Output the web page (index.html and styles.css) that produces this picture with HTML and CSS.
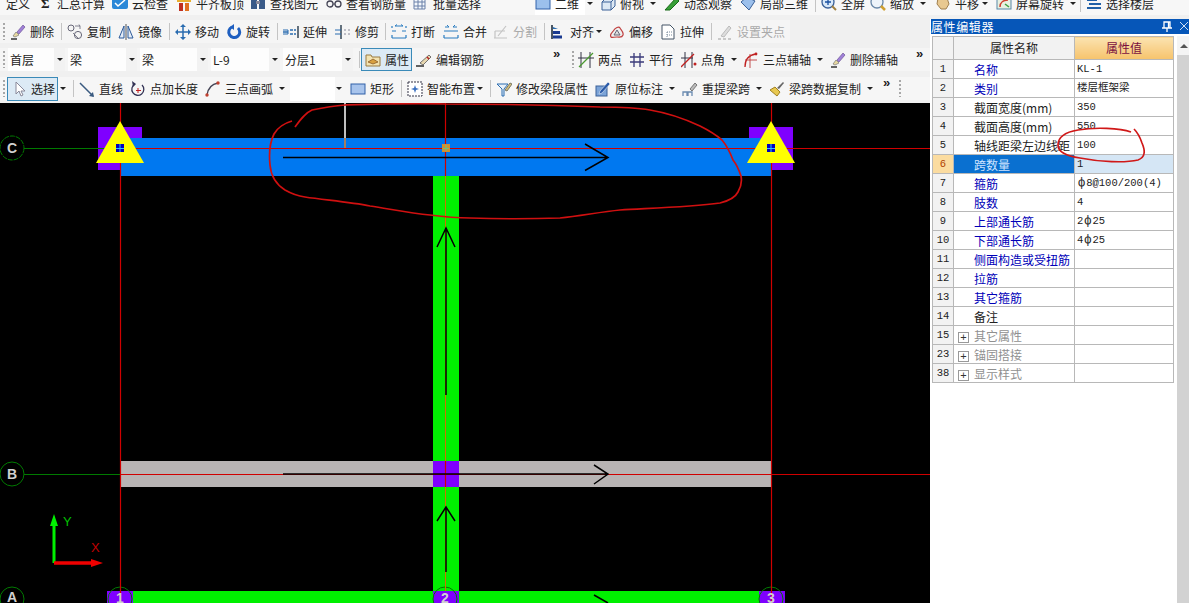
FILE: index.html
```html
<!DOCTYPE html>
<html lang="zh">
<head>
<meta charset="utf-8">
<title>属性编辑器</title>
<link rel="stylesheet" href="styles.css">
</head>
<body>
<svg class="sprite" aria-hidden="true">
  <symbol id="i-del" viewBox="0 0 16 16"><path d="M1 15h6" stroke="#333" stroke-width="1.5"/><path d="M3 12l3-4 3 3-4 2z" fill="#e8d8a0" stroke="#777" stroke-width=".7"/><path d="M7 8l6-7 2 2-6 7z" fill="#a080d8" stroke="#705898" stroke-width=".7"/></symbol>
  <symbol id="i-copy" viewBox="0 0 16 16"><g fill="none" stroke="#667" stroke-width="1"><circle cx="4" cy="4" r="3"/><circle cx="11" cy="11" r="3.6"/></g><path d="M8 2h5l-1-1.500M13 2v3M6 9l5 5" fill="none" stroke="#667" stroke-width=".8"/></symbol>
  <symbol id="i-mirror" viewBox="0 0 16 16"><path d="M6 2v12H1zM10 2v12h5z" fill="#e4ecf6" stroke="#2c5a9a"/><path d="M8 0v16" stroke="#555"/></symbol>
  <symbol id="i-move" viewBox="0 0 16 16"><path d="M8 1v14M1 8h14" stroke="#2a6cb0" stroke-width="1.500"/><path d="M8 0l3 3H5zM8 16l3-3H5zM0 8l3-3v6zM16 8l-3-3v6z" fill="#2a6cb0"/></symbol>
  <symbol id="i-rot" viewBox="0 0 16 16"><path d="M6 3a5.500 5.500 0 1 0 6 1" fill="none" stroke="#1f5fc0" stroke-width="3"/><path d="M8 0v6L4 3z" fill="#1f5fc0"/></symbol>
  <symbol id="i-ext" viewBox="0 0 16 16"><path d="M15 2v12" stroke="#345" stroke-width="1.500"/><path d="M0 8h5M7 6h3M7 10h3M11 6h2M11 10h2" stroke="#2a6cb0" stroke-width="1.300"/><path d="M0 6h5v4H0" fill="none" stroke="#2a6cb0"/></symbol>
  <symbol id="i-trim" viewBox="0 0 16 16"><path d="M6 1v14" stroke="#345" stroke-width="1.500"/><path d="M0 6h6M0 10h6" stroke="#2a6cb0"/><path d="M9 6h2M13 6h2M9 10h2M13 10h2" stroke="#889" /></symbol>
  <symbol id="i-break" viewBox="0 0 16 16"><path d="M1 4v-2M15 4v-2M1 14h14M1 11v3M15 11v3M1 7h4M11 7h4" stroke="#2a7cc0" stroke-width="1.200" fill="none"/><path d="M4 2h8M4 2l2-1.500M12 2l-2-1.500" stroke="#2a7cc0" fill="none"/></symbol>
  <symbol id="i-merge" viewBox="0 0 16 16"><path d="M1 14h14M1 11v3M15 11v3M1 7h14" stroke="#2a7cc0" stroke-width="1.200" fill="none"/><path d="M2 3h4M10 3h4M6 3l-2-2M10 3l2-2" stroke="#2a7cc0" fill="none"/></symbol>
  <symbol id="i-split" viewBox="0 0 16 16"><path d="M1 14h13M2 7v7M2 7h10M13 2L5 12" stroke="#c4c4c4" stroke-width="1.200" fill="none"/></symbol>
  <symbol id="i-align" viewBox="0 0 16 16"><path d="M2 1v14" stroke="#123" stroke-width="1.500"/><path d="M3 3l5 2H3z" fill="#2a6cb0"/><rect x="3" y="7" width="7" height="3" fill="#1a3a90"/><rect x="3" y="11.500" width="9" height="3" fill="#1a3a90"/></symbol>
  <symbol id="i-offset" viewBox="0 0 16 16"><path d="M2 13c-2-3 2-5 3-7s5-4 6-2 4 4 3 7-3 2-6 2-5 1-6 0z" fill="#eee" stroke="#c04040" stroke-width="1.200"/><path d="M5 11l3-5 3 5z" fill="#ddd" stroke="#667"/></symbol>
  <symbol id="i-stretch" viewBox="0 0 16 16"><path d="M2 1h8l4 4v10H2z" fill="#fff" stroke="#456"/><path d="M7 8h6M7 11h6M7 8v5" stroke="#789" stroke-dasharray="1 1"/></symbol>
  <symbol id="i-set" viewBox="0 0 16 16"><path d="M1 15h3M6 15h3M11 15h3" stroke="#bbb" stroke-width="1.300"/><path d="M4 12L12 2l2 2-7 9z" fill="#ddd" stroke="#bbb"/></symbol>
  <symbol id="i-attr" viewBox="0 0 16 16"><path d="M1 3h5l1 2h8v9H1z" fill="#f2e2b0" stroke="#9a7a40"/><path d="M3 10l5-3 5 3-5 2z" fill="#d8a040" stroke="#805020" stroke-width=".7"/></symbol>
  <symbol id="i-edit" viewBox="0 0 16 16"><path d="M0 14h8" stroke="#222" stroke-width="1.400"/><path d="M4 11l9-8 2 2-8 8z" fill="#e8d8b0" stroke="#555" stroke-width=".8"/><path d="M11 5l2 2" stroke="#c02020" stroke-width="1.500"/></symbol>
  <symbol id="i-two" viewBox="0 0 16 16"><path d="M3 0v16M12 0v16M0 6h16" stroke="#334" stroke-width="1"/><path d="M1 15L15 1" stroke="#4a9a30" stroke-width="1.300"/></symbol>
  <symbol id="i-par" viewBox="0 0 16 16"><path d="M1 5h14M1 10h14M5 1v14M11 1v14" stroke="#3a3a7a" stroke-width="1.300"/></symbol>
  <symbol id="i-ang" viewBox="0 0 16 16"><path d="M4 0v16M11 0v16M0 6h12" stroke="#334" stroke-width="1"/><path d="M0 15L13 2" stroke="#c02020" stroke-width="1.300"/><circle cx="14" cy="12" r="1.500" fill="#c02020"/></symbol>
  <symbol id="i-3pt" viewBox="0 0 16 16"><path d="M2 15c0-8 4-12 11-13" fill="none" stroke="#c02020" stroke-width="1.300"/><path d="M7 2v14M2 8h12" stroke="#c04040" stroke-width=".9"/><circle cx="13" cy="2" r="1.400" fill="#c02020"/></symbol>
  <symbol id="i-sel" viewBox="0 0 16 16"><path d="M5 1v12l3-3 2 5 2-1-2-4h4z" fill="#fff" stroke="#889"/></symbol>
  <symbol id="i-line" viewBox="0 0 16 16"><path d="M1 2l13 13" stroke="#3a5a80" stroke-width="1.500"/><path d="M15 16l-1-5-4 4z" fill="#3a5a80"/></symbol>
  <symbol id="i-pt" viewBox="0 0 16 16"><path d="M5 3a6 6 0 1 0 7 1" fill="none" stroke="#335" stroke-width="1.300"/><path d="M2 0l4 3-3 3z" fill="#335"/><path d="M8 7v5M6 9.500h5" stroke="#c02020"/></symbol>
  <symbol id="i-arc" viewBox="0 0 16 16"><path d="M2 14C3 7 7 3 13 2" fill="none" stroke="#445" stroke-width="1.300"/><circle cx="2" cy="14" r="1.700" fill="#c04030"/><circle cx="13" cy="2" r="1.700" fill="#c04030"/></symbol>
  <symbol id="i-rect" viewBox="0 0 16 16"><rect x="1" y="3" width="14" height="10" fill="#a8c4ec" stroke="#3060a8"/></symbol>
  <symbol id="i-smart" viewBox="0 0 16 16"><rect x="1" y="1" width="14" height="14" fill="#fff" stroke="#334" stroke-dasharray="2 1"/><path d="M8 4l1 3 3 1-3 1-1 3-1-3-3-1 3-1z" fill="#3a70c0"/></symbol>
  <symbol id="i-mod" viewBox="0 0 16 16"><path d="M1 3h11L8 8v7H6V8z" fill="#e8f0f8" stroke="#2a6cb0"/><path d="M9 9l5-7 2 1-5 7z" fill="#d8c078" stroke="#776"/></symbol>
  <symbol id="i-orig" viewBox="0 0 16 16"><rect x="1" y="5" width="11" height="10" fill="#7ca4d8" stroke="#3a6098"/><path d="M5 10l8-9 2 2-8 9-3 1z" fill="#2a5aa8" stroke="#fff" stroke-width=".5"/></symbol>
  <symbol id="i-re" viewBox="0 0 16 16"><path d="M1 15v-4h4v4M6 15v-4h4v4" fill="none" stroke="#6a8ab0" stroke-width="1.300"/><path d="M8 8l5-6 2 2-5 6z" fill="#bbb" stroke="#777"/></symbol>
  <symbol id="i-data" viewBox="0 0 16 16"><path d="M1 9l5-3 5 5-3 4z" fill="#e8c850" stroke="#a08020"/><path d="M8 7l6-6 1 1-5 6z" fill="#666"/></symbol>
  <symbol id="i-cloud" viewBox="0 0 16 16"><rect x="0" y="1" width="16" height="12" rx="2" fill="#2a88d8"/><path d="M3 7l3 3 7-6" fill="none" stroke="#fff" stroke-width="1.500"/></symbol>
  <symbol id="i-top" viewBox="0 0 16 16"><rect x="1" y="2" width="14" height="4" fill="#e8b030"/><rect x="3" y="7" width="4" height="8" fill="#c03020"/><rect x="9" y="7" width="4" height="8" fill="#e07020"/></symbol>
  <symbol id="i-find" viewBox="0 0 16 16"><rect x="1" y="4" width="6" height="9" fill="#3a5a88"/><rect x="9" y="4" width="6" height="9" fill="#3a5a88"/><rect x="6" y="5" width="4" height="3" fill="#889"/></symbol>
  <symbol id="i-view" viewBox="0 0 16 16"><circle cx="4" cy="8" r="3" fill="none" stroke="#445" stroke-width="1.300"/><circle cx="12" cy="8" r="3" fill="none" stroke="#445" stroke-width="1.300"/><path d="M7 8h2" stroke="#445"/></symbol>
  <symbol id="i-batch" viewBox="0 0 16 16"><path d="M1 2h11v11H1zM1 6h11M1 10h11M5 2v11M9 2v11" fill="#f4f8fc" stroke="#6a80a8"/></symbol>
  <symbol id="i-2d" viewBox="0 0 16 16"><rect x="1" y="1" width="14" height="12" fill="#9cc0ec" stroke="#3060a8"/></symbol>
  <symbol id="i-box" viewBox="0 0 16 16"><path d="M2 6l4-4h9v8l-4 4H2z" fill="#dce8f4" stroke="#3a6098"/><path d="M2 6h9v8M11 6l4-4" fill="none" stroke="#3a6098"/></symbol>
  <symbol id="i-dyn" viewBox="0 0 16 16"><path d="M1 14L12 2l3 3-9 9z" fill="#38a038" stroke="#1a6a1a"/></symbol>
  <symbol id="i-local" viewBox="0 0 16 16"><path d="M1 6l6-5 8 4-6 9z" fill="#9cc0ec" stroke="#3a6098"/></symbol>
  <symbol id="i-full" viewBox="0 0 16 16"><circle cx="7" cy="6" r="6" fill="#d8e8f8" stroke="#3a6098" stroke-width="1.300"/><path d="M4 6h6M7 3v6" stroke="#1a50a0" stroke-width="1.300"/><path d="M11 10l4 4" stroke="#a08040" stroke-width="2"/></symbol>
  <symbol id="i-zoom" viewBox="0 0 16 16"><circle cx="7" cy="6" r="6" fill="#eef4fa" stroke="#6a88a8" stroke-width="1.300"/><path d="M11 10l4 4" stroke="#d0a030" stroke-width="2.500"/></symbol>
  <symbol id="i-pan" viewBox="0 0 16 16"><path d="M3 2h9l2 6-3 5H6L2 8z" fill="#e8c890" stroke="#a08050"/></symbol>
  <symbol id="i-spin" viewBox="0 0 16 16"><rect x="1" y="1" width="14" height="12" fill="#e8f0e0" stroke="#5a88a8"/><path d="M4 11c0-5 4-7 8-7" fill="none" stroke="#d04030" stroke-width="1.500"/><path d="M9 8l4 3" stroke="#40a040" stroke-width="1.500"/></symbol>
  <symbol id="i-floor" viewBox="0 0 16 16"><path d="M1 4h10M3 8h12M1 12h14" stroke="#2060a8" stroke-width="2"/></symbol>
</svg>

<div class="tb top">
  <span class="item w-31">定义</span>
  <span class="item w-75"><span class="sigma">Σ</span>汇总计算</span>
  <span class="item w-64"><svg class="ic"><use href="#i-cloud"/></svg>云检查</span>
  <span class="item w-74"><svg class="ic"><use href="#i-top"/></svg>平齐板顶</span>
  <span class="item w-76"><svg class="ic"><use href="#i-find"/></svg>查找图元</span>
  <span class="item w-87"><svg class="ic"><use href="#i-view"/></svg>查看钢筋量</span>
  <span class="item w-122"><svg class="ic"><use href="#i-batch"/></svg>批量选择</span>
  <span class="item w-65 white"><svg class="ic"><use href="#i-2d"/></svg>二维<i class="caret wide"></i></span>
  <span class="item w-64"><svg class="ic"><use href="#i-box"/></svg>俯视<i class="caret"></i></span>
  <span class="item w-76"><svg class="ic"><use href="#i-dyn"/></svg>动态观察</span>
  <span class="item w-72"><svg class="ic"><use href="#i-local"/></svg>局部三维</span>
  <i class="sep"></i>
  <span class="item w-49"><svg class="ic"><use href="#i-full"/></svg>全屏</span>
  <span class="item w-65"><svg class="ic"><use href="#i-zoom"/></svg>缩放<i class="caret"></i></span>
  <span class="item w-61"><svg class="ic"><use href="#i-pan"/></svg>平移<i class="caret near"></i></span>
  <span class="item w-81"><svg class="ic"><use href="#i-spin"/></svg>屏幕旋转<i class="caret"></i></span>
  <i class="sep"></i>
  <span class="item w-80"><svg class="ic"><use href="#i-floor"/></svg>选择楼层</span>
</div>

<div class="main">
  <div class="workspace">
    <div class="tb r1">
      <i class="grip w-7"></i>
      <span class="item w-48"><svg class="ic"><use href="#i-del"/></svg>删除</span><i class="sep"></i>
      <span class="item w-51"><svg class="ic"><use href="#i-copy"/></svg>复制</span>
      <span class="item w-48"><svg class="ic"><use href="#i-mirror"/></svg>镜像</span><i class="sep"></i>
      <span class="item w-51"><svg class="ic"><use href="#i-move"/></svg>移动</span>
      <span class="item w-48"><svg class="ic"><use href="#i-rot"/></svg>旋转</span><i class="sep"></i>
      <span class="item w-52"><svg class="ic"><use href="#i-ext"/></svg>延伸</span>
      <span class="item w-47"><svg class="ic"><use href="#i-trim"/></svg>修剪</span><i class="sep"></i>
      <span class="item w-52"><svg class="ic"><use href="#i-break"/></svg>打断</span>
      <span class="item w-50"><svg class="ic"><use href="#i-merge"/></svg>合并</span>
      <span class="item w-48 off"><svg class="ic"><use href="#i-split"/></svg>分割</span><i class="sep"></i>
      <span class="item w-59"><svg class="ic"><use href="#i-align"/></svg>对齐<i class="caret tight"></i></span>
      <span class="item w-51"><svg class="ic"><use href="#i-offset"/></svg>偏移</span>
      <span class="item w-48"><svg class="ic"><use href="#i-stretch"/></svg>拉伸</span><i class="sep"></i>
      <span class="item w-73 off"><svg class="ic"><use href="#i-set"/></svg>设置夹点</span>
    </div>

    <div class="tb r2">
      <i class="grip w-5"></i>
      <span class="combo w-60"><span class="field">首层</span><span class="drop"><i class="caret flat"></i></span></span>
      <span class="combo w-72"><span class="field">梁</span><span class="drop"><i class="caret flat"></i></span></span>
      <span class="combo w-71"><span class="field">梁</span><span class="drop"><i class="caret flat"></i></span></span>
      <span class="combo w-72"><span class="field">L-9</span><span class="drop"><i class="caret flat"></i></span></span>
      <span class="combo w-73"><span class="field">分层1</span><span class="drop"><i class="caret flat"></i></span></span>
      <i class="sep slim"></i>
      <span class="item btn attr"><svg class="ic"><use href="#i-attr"/></svg>属性</span>
      <span class="item w-137"><svg class="ic"><use href="#i-edit"/></svg>编辑钢筋</span>
      <span class="more w-19">»</span>
      <i class="grip w-6"></i>
      <span class="item w-51"><svg class="ic"><use href="#i-two"/></svg>两点</span>
      <span class="item w-52"><svg class="ic"><use href="#i-par"/></svg>平行</span>
      <span class="item w-62"><svg class="ic"><use href="#i-ang"/></svg>点角<i class="caret"></i></span>
      <span class="item w-87"><svg class="ic"><use href="#i-3pt"/></svg>三点辅轴<i class="caret"></i></span>
      <span class="item w-86"><svg class="ic"><use href="#i-del"/></svg>删除辅轴</span>
      <span class="more">»</span>
    </div>

    <div class="tb r3">
      <i class="grip w-4"></i>
      <span class="item btn sel"><svg class="ic"><use href="#i-sel"/></svg>选择</span>
      <i class="caret stub"></i>
      <i class="sep"></i>
      <span class="item w-51"><svg class="ic"><use href="#i-line"/></svg>直线</span>
      <span class="item w-75"><svg class="ic"><use href="#i-pt"/></svg>点加长度</span>
      <span class="item w-85"><svg class="ic"><use href="#i-arc"/></svg>三点画弧<i class="caret"></i></span>
      <span class="blank w-60"><span class="blank-field"></span><i class="caret close"></i></span>
      <span class="item w-48"><svg class="ic"><use href="#i-rect"/></svg>矩形</span><i class="sep"></i>
      <span class="item w-80"><svg class="ic"><use href="#i-smart"/></svg>智能布置<i class="caret tight"></i></span><i class="sep"></i>
      <span class="item w-99"><svg class="ic"><use href="#i-mod"/></svg>修改梁段属性</span>
      <span class="item w-87"><svg class="ic"><use href="#i-orig"/></svg>原位标注<i class="caret"></i></span>
      <span class="item w-87"><svg class="ic"><use href="#i-re"/></svg>重提梁跨<i class="caret"></i></span>
      <span class="item w-114"><svg class="ic"><use href="#i-data"/></svg>梁跨数据复制<i class="caret"></i></span>
      <span class="more w-16">»</span>
      <i class="grip w-6"></i>
    </div>

    <svg class="canvas" viewBox="0 103 930 500" xmlns="http://www.w3.org/2000/svg">
      <rect x="0" y="103" width="930" height="500" fill="#000"/>
      <rect x="433" y="176" width="26" height="427" fill="#00f000"/>
      <rect x="98" y="127" width="44" height="43" fill="#7f00ff"/>
      <rect x="749" y="127" width="44" height="43" fill="#7f00ff"/>
      <rect x="120" y="138" width="651" height="38" fill="#0078f0"/>
      <rect x="120" y="461" width="651" height="26" fill="#b8b4b4"/>
      <rect x="433" y="461" width="26" height="26" fill="#7f00ff"/>
      <rect x="133" y="591" width="626" height="12" fill="#00f000"/>
      <rect x="107" y="591" width="26" height="12" fill="#7f00ff"/>
      <rect x="433" y="591" width="26" height="12" fill="#7f00ff"/>
      <rect x="759" y="591" width="26" height="12" fill="#7f00ff"/>
      <g stroke="#007a00" fill="none" stroke-width="1">
        <path d="M24 148.500H120M24 474.500H120"/>
        <circle cx="12" cy="148" r="12" stroke-dasharray="5 1"/>
        <circle cx="12" cy="474" r="12"/>
        <circle cx="12" cy="599" r="12"/>
        <circle cx="120" cy="599" r="12"/>
        <circle cx="445" cy="599" r="12"/>
        <circle cx="771" cy="599" r="12"/>
      </g>
      <g stroke="#d00000" stroke-width="1.200" fill="none">
        <path d="M120.500 103V603M771.500 103V603M120 148.500H930M120 474.500H930"/>
        <path d="M445.500 103V176M445.500 461V487"/>
      </g>
      <path d="M445.500 176V461M445.500 487V591" stroke="#d07000" stroke-width="1"/>
      <path d="M345 103V138" stroke="#fff" stroke-width="1.500"/>
      <path d="M345 138V148" stroke="#d88030" stroke-width="1.500"/>
      <g class="cad-label">
        <text x="12" y="153">C</text>
        <text x="12" y="479">B</text>
        <text x="12" y="602">A</text>
        <text x="120" y="603">1</text>
        <text x="445" y="603">2</text>
        <text x="771" y="603">3</text>
      </g>
      <g stroke="#000" fill="none" stroke-width="1.500">
        <path d="M283 157.500H608M585 144l23 13.500-23 13"/>
        <path d="M283 474H608M594 465l14 9-14 10"/>
        <path d="M594 595l14 8"/>
        <path d="M446 395V229M437 247l9-19 9 19"/>
        <path d="M446 572V507M437 521l9-14 9 14"/>
      </g>
      <path d="M120 121L144 163H96z" fill="#ff0"/>
      <path d="M771 121L795 163H747z" fill="#ff0"/>
      <rect x="116" y="144" width="8" height="8" fill="#0000c0"/>
      <rect x="767" y="144" width="8" height="8" fill="#0000c0"/>
      <path d="M120 144v8M116 148.500h8M771 144v8M767 148.500h8" stroke="#30c0ff"/>
      <rect x="442" y="144" width="8" height="8" fill="#d09030"/>
      <path d="M446 145v6M443 148.500h6" stroke="#70c080"/>
      <path d="M54 526V563" stroke="#00f000" stroke-width="3"/>
      <path d="M54 514l4 12h-8z" fill="#00f000"/>
      <path d="M54 563H92" stroke="#f00000" stroke-width="3.500"/>
      <path d="M103 563l-12-4v8z" fill="#f00000"/>
      <text class="axis-y" x="63" y="526">Y</text>
      <text class="axis-x" x="91" y="552">X</text>
      <path d="M292 121C285 123 278 127 274 134C270 142 269 155 270 165C271 176 277 185 285 190C292 194 298 196 305 197C325 200 350 202 370 206C390 209 410 213 430 215C445 217 460 218 470 218C500 219 530 219 560 218C580 216 600 212 620 210C655 208 690 207 720 203C728 201 735 198 738 192C741 187 742 181 741 176C739 170 737 165 733 160C730 152 727 146 722 140C715 134 708 130 700 126C685 119 668 113 650 110C633 107 617 107 600 107C550 105 500 104 445 104C410 103 378 104 345 105C333 106 322 108 312 110C305 113 300 120 295 127" fill="none" stroke="#d01010" stroke-width="1.700"/>
    </svg>
  </div>

  <aside class="panel">
    <div class="title">
      <span class="title-text">属性编辑器</span>
      <svg class="title-icons" viewBox="0 0 28 15" aria-hidden="true">
        <path d="M3 3h6v6H3zM1 9h10M6 9v4M7.500 3v6" fill="none" stroke="#fff" stroke-width="1.300"/>
        <path d="M19 3l8 8M27 3l-8 8" stroke="#cfe0f5" stroke-width="1"/>
      </svg>
    </div>
    <div class="panel-body">
      <table class="grid">
        <colgroup><col class="c-i"><col class="c-n"><col class="c-v"></colgroup>
        <thead>
          <tr><th class="idx"></th><th>属性名称</th><th class="val-head">属性值</th></tr>
        </thead>
        <tbody>
          <tr><td class="idx">1</td><td class="name link">名称</td><td class="val">KL-1</td></tr>
          <tr><td class="idx">2</td><td class="name link">类别</td><td class="val">楼层框架梁</td></tr>
          <tr><td class="idx">3</td><td class="name">截面宽度(mm)</td><td class="val">350</td></tr>
          <tr><td class="idx">4</td><td class="name">截面高度(mm)</td><td class="val">550</td></tr>
          <tr><td class="idx">5</td><td class="name">轴线距梁左边线距</td><td class="val">100</td></tr>
          <tr class="current"><td class="idx">6</td><td class="name link">跨数量</td><td class="val">1</td></tr>
          <tr><td class="idx">7</td><td class="name link">箍筋</td><td class="val"><span class="rb">ф</span>8@100/200(4)</td></tr>
          <tr><td class="idx">8</td><td class="name link">肢数</td><td class="val">4</td></tr>
          <tr><td class="idx">9</td><td class="name link">上部通长筋</td><td class="val">2<span class="rb">ф</span>25</td></tr>
          <tr><td class="idx">10</td><td class="name link">下部通长筋</td><td class="val">4<span class="rb">ф</span>25</td></tr>
          <tr><td class="idx">11</td><td class="name link">侧面构造或受扭筋</td><td class="val"></td></tr>
          <tr><td class="idx">12</td><td class="name link">拉筋</td><td class="val"></td></tr>
          <tr><td class="idx">13</td><td class="name link">其它箍筋</td><td class="val"></td></tr>
          <tr><td class="idx">14</td><td class="name">备注</td><td class="val"></td></tr>
          <tr><td class="idx">15</td><td class="name group"><i class="plus">+</i>其它属性</td><td class="val"></td></tr>
          <tr><td class="idx">23</td><td class="name group"><i class="plus">+</i>锚固搭接</td><td class="val"></td></tr>
          <tr><td class="idx">38</td><td class="name group"><i class="plus">+</i>显示样式</td><td class="val"></td></tr>
        </tbody>
      </table>
      <div class="scroll"><span class="scroll-up"><i class="up"></i></span><span class="scroll-track"></span></div>
    </div>
    <svg class="note" viewBox="930 19 259 584" xmlns="http://www.w3.org/2000/svg">
      <path d="M1131 132C1120 128 1095 127 1078 130C1066 132 1058 137 1058 145C1058 152 1066 156 1080 158C1100 162 1125 163 1138 160C1146 157 1145 150 1142 143C1140 137 1137 132 1134 129" fill="none" stroke="#d01818" stroke-width="1.700"/>
    </svg>
  </aside>
</div>
</body>
</html>
```

FILE: styles.css
```css
html, body {
  margin: 0;
  padding: 0;
  width: 1189px;
  height: 603px;
  overflow: hidden;
  background: #f0f0f0;
  font-family: "Noto Sans CJK SC", "Liberation Sans", sans-serif;
  font-size: 12px;
  color: #222;
}

.sprite { display: none; }

.tb {
  display: flex;
  align-items: center;
  height: 23px;
  white-space: nowrap;
  padding-left: 3px;
}
.tb i { font-style: normal; }

.top { margin-top: -8px; padding-left: 6px; background: #f7f7f7; }
.r1 { margin-top: 5px; width: 787px; background: #f5f5f5; }
.r2 { margin-top: 5px; background: #f5f5f5; }
.r3 { margin-top: 6px; background: #f6f6f6; }

.item {
  display: flex;
  align-items: center;
  flex: none;
  height: 23px;
  line-height: 23px;
}
.white { background: linear-gradient(90deg, #fff 50px, transparent 50px); }
.ic { width: 16px; height: 16px; flex: none; margin-right: 4px; }
.sigma { width: 20px; flex: none; padding-left: 4px; box-sizing: border-box; font-family: "Liberation Serif", serif; font-weight: bold; font-size: 13px; }
.off { color: #aaa; }

.w-4 { width: 4px; } .w-5 { width: 5px; } .w-6 { width: 6px; } .w-7 { width: 7px; }
.w-16 { width: 16px; } .w-19 { width: 19px; } .w-31 { width: 31px; }
.w-47 { width: 47px; } .w-48 { width: 48px; } .w-49 { width: 49px; }
.w-50 { width: 50px; } .w-51 { width: 51px; } .w-52 { width: 52px; }
.w-59 { width: 59px; } .w-60 { width: 60px; } .w-61 { width: 61px; }
.w-62 { width: 62px; } .w-64 { width: 64px; } .w-65 { width: 65px; }
.w-71 { width: 71px; } .w-72 { width: 72px; } .w-73 { width: 73px; }
.w-74 { width: 74px; } .w-75 { width: 75px; } .w-76 { width: 76px; }
.w-80 { width: 80px; } .w-81 { width: 81px; } .w-85 { width: 85px; }
.w-86 { width: 86px; } .w-87 { width: 87px; } .w-99 { width: 99px; }
.w-114 { width: 114px; } .w-122 { width: 122px; } .w-137 { width: 137px; }

.sep {
  flex: none;
  width: 9px;
  height: 17px;
  box-sizing: border-box;
  background: linear-gradient(#c4c4c4, #c4c4c4) 3px 0 / 1px 100% no-repeat;
}
.sep.slim { width: 5px; }

.grip {
  flex: none;
  height: 17px;
  background: repeating-linear-gradient(#a8a8a8 0 2px, transparent 2px 4px) 0 0 / 2px 100% no-repeat;
}

.caret {
  flex: none;
  width: 0;
  height: 0;
  margin-left: 6px;
  border-top: 3px solid #222;
  border-left: 3px solid transparent;
  border-right: 3px solid transparent;
}
.caret.wide { margin-left: 8px; }
.caret.near { margin-left: 3px; }
.caret.tight { margin-left: 2px; }
.caret.flat { margin-left: 0; }
.caret.stub { margin: 0 4px 0 2px; }
.caret.close { margin-left: 1px; }

.combo { display: flex; flex: none; height: 23px; padding-right: 3px; box-sizing: border-box; }
.field { flex: 1; min-width: 0; background: #fdfdfd; padding-left: 2px; line-height: 23px; }
.drop { flex: none; width: 11px; display: flex; align-items: center; justify-content: center; background: #f2f2f2; }

.btn {
  box-sizing: border-box;
  flex: none;
  width: 51px;
  padding-left: 3px;
  border: 1px solid #3a8ab8;
  background: #dceaf5;
}
.attr { margin-right: 4px; }
.sel { height: 24px; }

.more {
  flex: none;
  align-self: flex-start;
  font-family: "Liberation Sans", sans-serif;
  font-size: 13px;
  font-weight: bold;
  line-height: 12px;
}

.blank { display: flex; align-items: center; flex: none; }
.blank-field { width: 45px; height: 24px; background: #fff; flex: none; }

.main { display: flex; height: 588px; }
.workspace { width: 930px; flex: none; }
.canvas { display: block; width: 930px; height: 500px; margin-top: 3px; }

.cad-label text {
  font-family: "Liberation Sans", sans-serif;
  font-weight: bold;
  font-size: 14px;
  text-anchor: middle;
  fill: #d0d0d0;
}
.axis-y { font-family: "Liberation Sans", sans-serif; font-size: 13px; fill: #00c000; }
.axis-x { font-family: "Liberation Sans", sans-serif; font-size: 13px; fill: #c00000; }

.panel { position: relative; width: 259px; flex: none; margin-top: 4px; display: flex; flex-direction: column; background: #fff; }
.title {
  flex: none;
  display: flex;
  justify-content: space-between;
  align-items: center;
  height: 15px;
  margin-left: 1px;
  background: #0656b8;
  color: #fff;
  line-height: 15px;
}
.title-text { letter-spacing: .6px; }
.title-icons { width: 28px; height: 15px; flex: none; }

.panel-body { flex: 1; display: flex; padding: 2px 0 0 2px; min-height: 0; }

.grid {
  flex: none;
  align-self: flex-start;
  table-layout: fixed;
  width: 241px;
  border-collapse: collapse;
  margin-right: 4px;
}
.c-i { width: 21px; }
.c-n { width: 121px; }
.c-v { width: 99px; }
.grid th, .grid td {
  border: 1px solid #b8b8b8;
  height: 18px;
  padding: 0;
  line-height: 16px;
  font-weight: normal;
  overflow: hidden;
  white-space: nowrap;
}
.grid thead th { height: 22px; background: #f2f2f2; color: #222; }
.grid thead .val-head { background: linear-gradient(#fbe3b0, #f6c36c); color: #7a1040; }
.idx { background: #f2f2f2; text-align: center; font-family: "Liberation Mono", monospace; font-size: 10.500px; }
.grid thead .idx { background: #f2f2f2; }
.grid .name { padding: 1px 0 0 20px; height: 17px; }
.link { color: #0000b8; }
.grid .group { color: #909090; padding-left: 4px; }
.plus {
  display: inline-block;
  width: 9px;
  height: 9px;
  margin-right: 5px;
  border: 1px solid #999;
  color: #333;
  font-style: normal;
  font-family: "Liberation Sans", sans-serif;
  font-size: 11px;
  line-height: 9px;
  text-align: center;
  vertical-align: middle;
}
.grid .val { padding-left: 2px; font-family: "Liberation Mono", "Noto Sans CJK SC", monospace; font-size: 10.500px; color: #222; }
.rb { font-size: 12px; padding: 0 1px; }
.current .idx { background: #fbdca0; color: #b04000; }
.grid .current .name { background: #0a70d0; color: #cfe4ff; }
.current .val { background: #d5e6f5; }

.scroll { flex: none; width: 13px; display: flex; flex-direction: column; margin-left: -1px; }
.scroll-up { height: 19px; display: flex; align-items: center; justify-content: center; background: #f4f4f4; flex: none; }
.up {
  width: 0;
  height: 0;
  border-bottom: 4px solid #555;
  border-left: 4px solid transparent;
  border-right: 4px solid transparent;
}
.scroll-track { flex: 1; background: #d2d2d2; }

.note { position: absolute; left: 0; top: 0; width: 259px; height: 584px; pointer-events: none; }
```
